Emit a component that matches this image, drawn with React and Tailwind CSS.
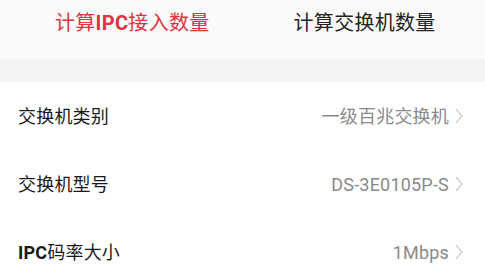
import React from 'react';

const font = { fontFamily: 'Roboto, "Noto Sans CJK SC", sans-serif' };

const Chevron = () => (
  <svg width="10" height="18" viewBox="0 0 10 18" className="ml-[5px]">
    <path d="M2 2 L8 9 L2 16" fill="none" stroke="#cfcfcf" strokeWidth="1.4" />
  </svg>
);

const rows = [
  { label: '交换机类别', value: '一级百兆交换机' },
  { label: <><b className="font-bold">IPC</b>码率大小</>, value: '1Mbps' },
];
rows.splice(1, 0, { label: '交换机型号', value: 'DS-3E0105P-S' });

export default function App() {
  return (
    <div className="w-[485px] h-[268px] overflow-hidden bg-white" style={font}>
      <div className="h-[59px] bg-[#fafafa] flex items-start pt-[10px] pl-[55px] gap-[84px]">
        <div className="text-[20px] leading-[27px] tracking-[0.3px] text-[#e0333d]">
          计算<span className="font-bold">IPC</span>接入数量
        </div>
        <div className="text-[20px] leading-[27px] tracking-[0.3px] text-[#222]">
          计算交换机数量
        </div>
      </div>
      <div className="h-[23px] bg-[#f4f4f4]" />
      {rows.map((r, i) => (
        <div key={i} className="h-[68px] flex items-center pl-[18px] pr-[21px]">
          <div className="flex-1 text-[18px] tracking-[0.2px] text-[#1a1a1a]">{r.label}</div>
          <div className="text-[18px] tracking-[0.2px] text-[#8a8a8a]">{r.value}</div>
          <Chevron />
        </div>
      ))}
    </div>
  );
}
